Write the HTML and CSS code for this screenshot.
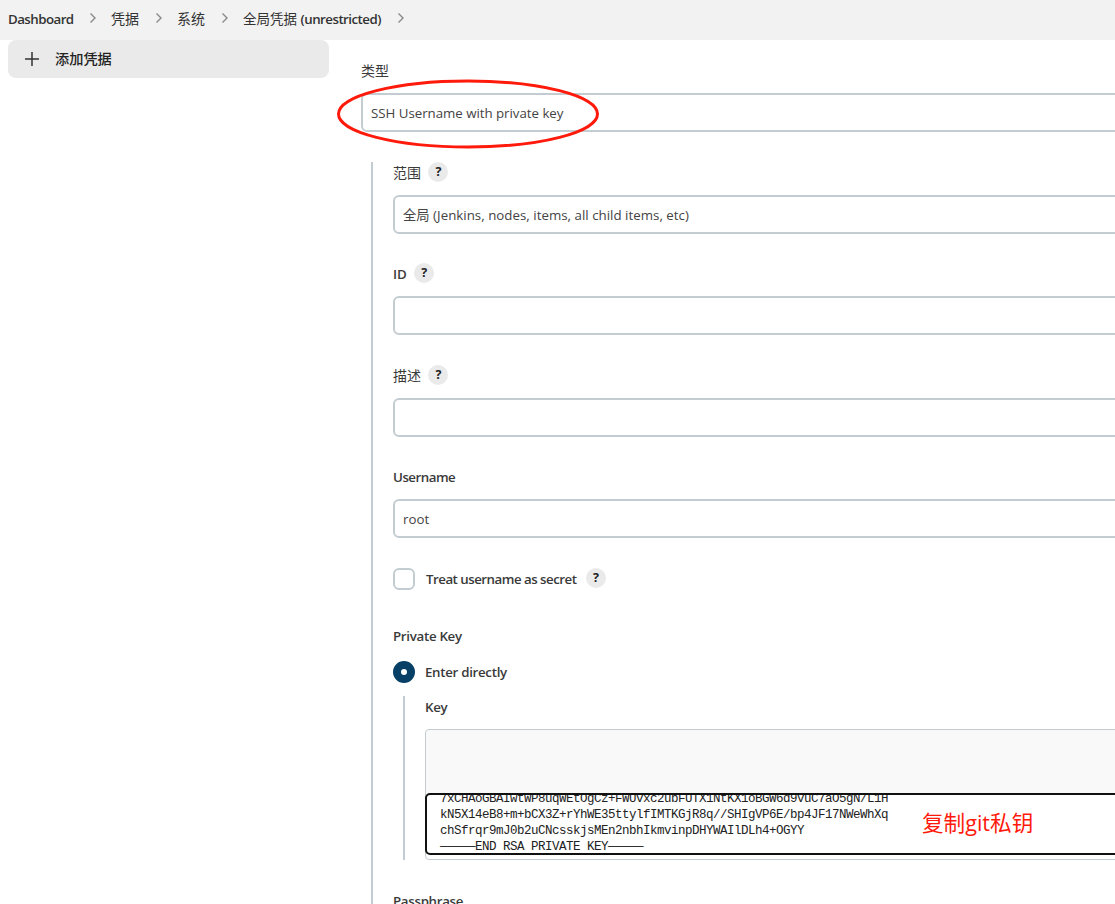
FILE: index.html
```html
<!DOCTYPE html>
<html lang="zh-CN">
<head>
<meta charset="utf-8">
<title>添加凭据</title>
<link rel="stylesheet" href="styles.css">
</head>
<body>
<header class="breadcrumbs">
  <span class="crumb crumb-home">Dashboard</span>
  <svg class="chev" viewBox="0 0 8 12"><path d="M1.500 1.500 6 6l-4.500 4.500"/></svg>
  <span class="crumb">凭据</span>
  <svg class="chev" viewBox="0 0 8 12"><path d="M1.500 1.500 6 6l-4.500 4.500"/></svg>
  <span class="crumb">系统</span>
  <svg class="chev" viewBox="0 0 8 12"><path d="M1.500 1.500 6 6l-4.500 4.500"/></svg>
  <span class="crumb crumb-global">全局凭据 <span class="latin">(unrestricted)</span></span>
  <svg class="chev" viewBox="0 0 8 12"><path d="M1.500 1.500 6 6l-4.500 4.500"/></svg>
</header>
<div class="page">
  <aside class="side">
    <a class="task"><svg class="plus" viewBox="0 0 14 14"><path d="M7 0v14M0 7h14"/></svg><span>添加凭据</span></a>
  </aside>
  <main class="main">
    <div class="kind">
      <div class="label kind-label">类型</div>
      <div class="kind-wrap">
        <div class="input"><span class="t-kind">SSH Username with private key</span></div>
        <svg class="ring" viewBox="0 0 264 70"><ellipse cx="132" cy="35" rx="129.500" ry="33"/></svg>
      </div>
    </div>
    <div class="nested">
      <div class="field">
        <div class="label"><span class="cjk">范围</span><span class="help">?</span></div>
        <div class="input"><span class="t-scope">全局 (Jenkins, nodes, items, all child items, etc)</span></div>
      </div>
      <div class="field">
        <div class="label"><span class="t-id">ID</span><span class="help">?</span></div>
        <div class="input"></div>
      </div>
      <div class="field">
        <div class="label"><span class="cjk">描述</span><span class="help">?</span></div>
        <div class="input"></div>
      </div>
      <div class="field">
        <div class="label"><span class="t-user">Username</span></div>
        <div class="input"><span>root</span></div>
      </div>
      <div class="check-row">
        <span class="checkbox"></span>
        <span class="label t-treat">Treat username as secret</span>
        <span class="help">?</span>
      </div>
      <div class="label pk-label"><span>Private Key</span></div>
      <div class="radio-row"><span class="radio"></span><span class="label">Enter directly</span></div>
      <div class="key-block">
        <div class="label"><span>Key</span></div>
        <div class="key-box">
          <div class="key-area">
            <pre class="key-text">7xCHAoGBAIwtWP8uqWEtOgCz+FWUvxc2ubFUTX1NtKX1oBGW6d9vuC7aO5gN/L1H
kN5X14eB8+m+bCX3Z+rYhWE35ttylfIMTKGjR8q//SHIgVP6E/bp4JF17NWeWhXq
chSfrqr9mJ0b2uCNcsskjsMEn2nbhIkmvinpDHYWAIlDLh4+OGYY
—————END RSA PRIVATE KEY—————</pre>
            <span class="note">复制git私钥</span>
          </div>
        </div>
      </div>
      <div class="label pass"><span>Passphrase</span></div>
    </div>
  </main>
</div>
</body>
</html>
```
FILE: styles.css
```css
* { box-sizing: border-box; }
body {
  margin: 0;
  height: 904px;
  overflow: hidden;
  background: #fff;
  color: #333;
  font: 13.3px/20px "Open Sans", "Noto Sans CJK SC", sans-serif;
}
.breadcrumbs {
  display: flex;
  align-items: center;
  height: 40px;
  padding: 0 0 2px 8px;
  background: #f2f2f2;
  white-space: nowrap;
}
.crumb { width: 28px; font-size: 14px; font-weight: 400; }
.crumb-home { width: 65px; font-size: 13.3px; font-weight: 600; letter-spacing: -.55px; }
.crumb-global { width: 138px; font-size: 13.500px; }
.latin { font-size: 13.300px; font-weight: 600; letter-spacing: -.52px; }
.chev { width: 8px; height: 12px; margin: 0 14px 2px 16px; flex: none; }
.chev path { fill: none; stroke: #888; stroke-width: 1.4; }
.page { display: flex; height: 864px; }
.side { width: 361px; flex: none; padding-left: 8px; }
.task {
  display: flex;
  align-items: center;
  width: 321px;
  height: 38px;
  padding-left: 17px;
  border-radius: 8px;
  background: #eaeaea;
  font-size: 14.200px;
  font-weight: 500;
  color: #222;
}
.plus { width: 14px; height: 14px; margin-right: 16px; }
.plus path { stroke: #333; stroke-width: 1.5; }
.main { flex: 1; min-width: 0; padding-top: 21px; }
.label {
  display: flex;
  align-items: center;
  height: 20px;
  color: #3a3a3a;
  font-weight: 600;
  letter-spacing: -.3px;
  white-space: nowrap;
}
.cjk, .kind-label { font-size: 14px; font-weight: 400; letter-spacing: 0; }
.kind-wrap { position: relative; margin-top: 12px; }
.input {
  display: flex;
  align-items: center;
  height: 39px;
  margin-right: -12px;
  padding: 0 8px;
  border: 2px solid #c3cdd1;
  border-radius: 6px;
  background: #fff;
  color: #444;
  white-space: nowrap;
}
.t-kind { letter-spacing: -.03px; }
.t-scope { letter-spacing: .02px; }
.ring { position: absolute; left: -25px; top: -14.500px; width: 264px; height: 70px; }
.ring ellipse { fill: none; stroke: #ff1a0c; stroke-width: 3; }
.nested {
  height: 760px;
  margin: 30px 0 0 10px;
  padding-left: 20px;
  border-left: 2px solid #c3cdd1;
}
.field { height: 101.400px; }
.field .input { margin-top: 13px; }
.field .label > span:first-child { padding-top: 2px; }
.t-user { letter-spacing: -.5px; }
.t-id { letter-spacing: 0; }
.help {
  display: flex;
  align-items: center;
  justify-content: center;
  width: 20px;
  height: 20px;
  margin-left: 7.400px;
  border-radius: 50%;
  background: #eaeaea;
  color: #222;
  font-size: 12.500px;
  font-weight: 700;
  letter-spacing: 0;
}
.check-row { display: flex; align-items: center; height: 22px; }
.check-row .help { margin: 0 0 2px 8px; }
.t-treat { width: 152px; letter-spacing: -.51px; }
.checkbox { width: 22px; height: 22px; margin-right: 11px; border: 2px solid #c3cdd1; border-radius: 6px; }
.pk-label { margin-top: 36px; }
.radio-row { display: flex; align-items: center; height: 22px; margin-top: 15px; }
.radio { width: 22px; height: 22px; margin-right: 10px; border: 8px solid #073f66; border-radius: 50%; }
.key-block { height: 164px; margin: 13px 0 0 10px; padding: 1px 0 0 20px; border-left: 2px solid #c3cdd1; }
.key-box {
  height: 131px;
  margin: 12px -12px 0 0;
  padding-top: 63px;
  border: 1px solid #c3cdd1;
  border-radius: 4px;
  background: linear-gradient(#f9f9f9 0 66px, #fff 66px);
}
.key-area {
  display: flex;
  align-items: flex-end;
  height: 62px;
  margin-left: -1px;
  border: 2px solid #111;
  border-radius: 5px;
  background: #fff;
  overflow: hidden;
}
.key-text {
  flex: none;
  width: 448px;
  margin: 0 0 -2px 13px;
  font: 12.500px/16px "Liberation Mono", monospace;
  letter-spacing: -.501px;
  color: #222;
}
.note { margin: 0 0 15px 34px; color: #ff1a0c; font-size: 21.600px; line-height: 30px; white-space: nowrap; }
.pass { margin-top: 31px; }
```
